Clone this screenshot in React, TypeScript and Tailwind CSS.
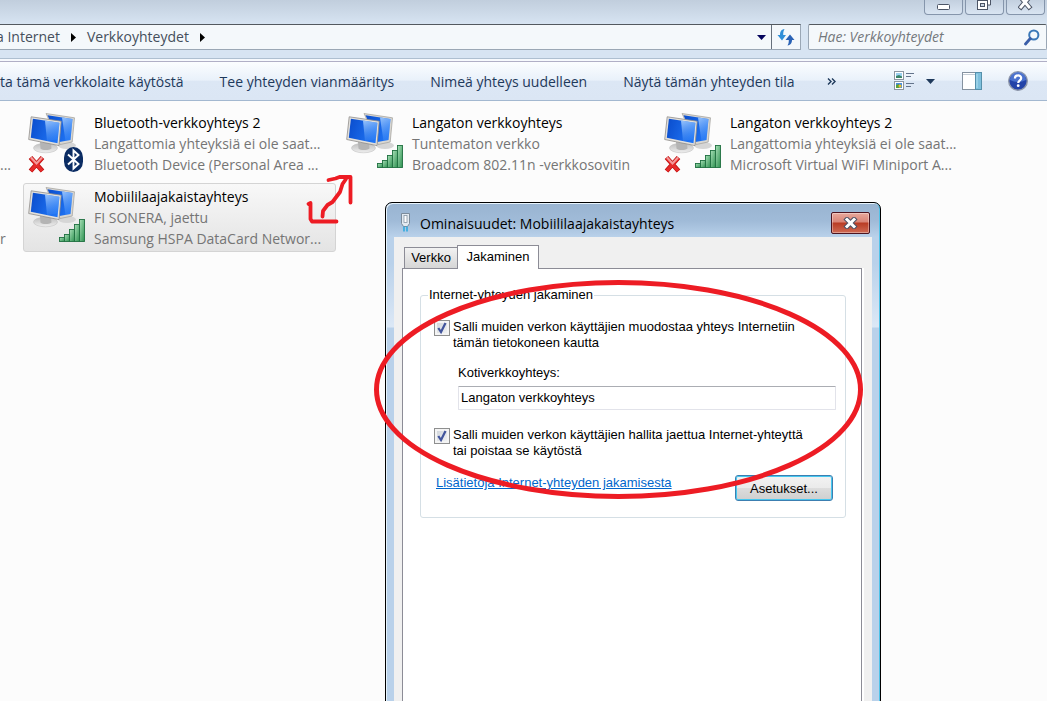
import React, { useId } from "react";

type Badge = "bluetooth" | "signal";

interface Connection {
  name: string;
  status: string;
  device: string;
  badge: Badge;
  offline?: boolean;
  selected?: boolean;
}

const connections: Connection[] = [
  {
    name: "Bluetooth-verkkoyhteys 2",
    status: "Langattomia yhteyksiä ei ole saat...",
    device: "Bluetooth Device (Personal Area ...",
    badge: "bluetooth",
    offline: true,
  },
  {
    name: "Langaton verkkoyhteys",
    status: "Tuntematon verkko",
    device: "Broadcom 802.11n -verkkosovitin",
    badge: "signal",
  },
  {
    name: "Langaton verkkoyhteys 2",
    status: "Langattomia yhteyksiä ei ole saat...",
    device: "Microsoft Virtual WiFi Miniport A...",
    badge: "signal",
    offline: true,
  },
  {
    name: "Mobiililaajakaistayhteys",
    status: "FI SONERA, jaettu",
    device: "Samsung HSPA DataCard Networ...",
    badge: "signal",
    selected: true,
  },
];

function ConnectionIcon({ badge, offline }: { badge: Badge; offline?: boolean }) {
  const id = useId();
  const screen = `${id}screen`;
  const bar = `${id}bar`;
  const metal = `${id}metal`;
  const glare = `${id}glare`;
  return (
    <svg width="60" height="64" viewBox="0 0 60 64" className="shrink-0" aria-hidden="true">
      <defs>
        <linearGradient id={screen} x1="0" y1="0" x2="1" y2="0.300">
          <stop offset="0" stopColor="#0a4ccc" />
          <stop offset="1" stopColor="#1f74f4" />
        </linearGradient>
        <linearGradient id={glare} x1="0" y1="0" x2="0.300" y2="1">
          <stop offset="0" stopColor="#a9d0ff" stopOpacity="0.900" />
          <stop offset="1" stopColor="#5fa2fa" stopOpacity="0.200" />
        </linearGradient>
        <linearGradient id={bar} x1="0" y1="0" x2="1" y2="1">
          <stop offset="0" stopColor="#a9e0b8" />
          <stop offset="1" stopColor="#2d9150" />
        </linearGradient>
        <linearGradient id={metal} x1="0" y1="0" x2="0" y2="1">
          <stop offset="0" stopColor="#bdbdbd" />
          <stop offset="1" stopColor="#efefef" />
        </linearGradient>
      </defs>
      <ellipse cx="41" cy="34.500" rx="9" ry="3.500" fill="#d6d6d6" />
      <path d="M20 2.500l28.500 4.300-2.300 24.200-12 2.500z" fill="#d9d7d2" stroke="#9f9d99" strokeWidth="0.700" />
      <path d="M21.500 4.200l25 3.800-2 21-11 2z" fill={`url(#${screen})`} />
      <path d="M36 6.400l10.500 1.600-2 21-5 1z" fill={`url(#${glare})`} />
      <ellipse cx="19.500" cy="37" rx="12" ry="4.800" fill={`url(#${metal})`} stroke="#c4c4c4" strokeWidth="0.600" />
      <path d="M14 31l11 1.500 0.500 5c-3 2-9 2-11 0z" fill="#b4b4b4" />
      <path d="M5.200 5.800l30 4.400-2.200 24.400-30.300-6.100z" fill="#e2e0dc" stroke="#8f8d8a" strokeWidth="0.800" />
      <path d="M6.900 7.800l26.500 3.900-1.900 20.500-26.700-5.400z" fill={`url(#${screen})`} />
      <path d="M19 9.600l14.400 2.100-1.500 16.500-10.900 1.800z" fill={`url(#${glare})`} />
      {offline && (
        <g>
          <path d="M4.500 46.500l12 13.500M16.500 46.500l-12 13.500" fill="none" stroke="#b80f0f" strokeWidth="4.800" />
          <path d="M4.800 46.800l11.400 13M16.200 46.800l-11.400 13" fill="none" stroke="#e62a2a" strokeWidth="3.400" />
          <path d="M5 46.500l5.500 6 5.500-6" fill="none" stroke="#f49a9a" strokeWidth="2" />
        </g>
      )}
      {badge === "signal" ? (
        <g fill={`url(#${bar})`} stroke="#1f7040" strokeWidth="0.900">
          <rect x="33.500" y="52.500" width="5" height="4" />
          <rect x="38.500" y="49.500" width="5" height="7" />
          <rect x="43.500" y="44.500" width="5" height="12" />
          <rect x="48.500" y="39.500" width="5" height="17" />
          <rect x="53.500" y="34.500" width="5" height="22" />
        </g>
      ) : (
        <g>
          <rect x="38" y="36" width="19" height="25" rx="9.500" ry="10.500" fill="#0b2c63" />
          <path d="M42 43.500l10.500 9.500-5 4.500V39.500l5 4.500L42 53.500" fill="none" stroke="#fff" strokeWidth="1.900" />
        </g>
      )}
    </svg>
  );
}

function ConnectionItem({ item }: { item: Connection }) {
  return (
    <li
      className={
        item.selected
          ? "flex h-[69px] gap-2 rounded-[3px] border border-[#d4d4d4] bg-linear-to-b from-[#f8f8f8] to-[#e4e4e4] pt-px pl-0.5"
          : "flex h-[69px] gap-2 rounded-[3px] border border-transparent pt-px pl-0.5"
      }
    >
      <ConnectionIcon badge={item.badge} offline={item.offline} />
      <div className="pt-px leading-[21px] whitespace-nowrap text-[#757575]">
        <p className="text-black">{item.name}</p>
        <p>{item.status}</p>
        <p>{item.device}</p>
      </div>
    </li>
  );
}

function Crumb({ children }: { children: string }) {
  return (
    <>
      <a href="#" className="text-[#454f5b]">{children}</a>
      <svg width="5" height="9" viewBox="0 0 5 9" aria-hidden="true">
        <path d="M0 0l5 4.500-5 4.500z" fill="#000" />
      </svg>
    </>
  );
}

function CaptionButton({ label, children }: { label: string; children: React.ReactNode }) {
  return (
    <button
      aria-label={label}
      className="flex h-[15px] w-[39px] items-center justify-center rounded-b-[4px] border border-t-0 border-[#8595ab] bg-linear-to-b from-[#c3d0df] to-[#d9e5f2] pb-1"
    >
      {children}
    </button>
  );
}

function CaptionBar() {
  return (
    <header className="flex h-6 justify-end gap-0.5 bg-linear-to-b from-[#c1cedd] to-[#d7e4f2] pr-0.5">
      <CaptionButton label="Pienennä">
        <svg width="14" height="12" viewBox="0 0 14 12">
          <rect x="0.500" y="5.500" width="12" height="5" rx="1" fill="#fff" stroke="#4c5566" />
        </svg>
      </CaptionButton>
      <CaptionButton label="Palauta">
        <svg width="16" height="12" viewBox="0 0 16 12">
          <path d="M4.500-1v-2h9v9h-3" fill="#fff" stroke="#4c5566" />
          <rect x="0.500" y="1.500" width="10" height="9" fill="#fff" stroke="#4c5566" />
          <rect x="3.500" y="4.500" width="4" height="3" fill="#c9d5e2" stroke="#4c5566" />
        </svg>
      </CaptionButton>
      <CaptionButton label="Sulje">
        <svg width="16" height="12" viewBox="0 0 16 12">
          <path d="M3-1.500l8 9.500M11-1.500l-8 9.500" stroke="#4c5566" strokeWidth="5" strokeLinecap="square" />
          <path d="M3-1.500l8 9.500M11-1.500l-8 9.500" stroke="#fff" strokeWidth="3" strokeLinecap="square" />
        </svg>
      </CaptionButton>
    </header>
  );
}

function AddressRow() {
  return (
    <div className="flex h-[34px] gap-[7px] bg-[#d7e4f2] pb-2">
      <div className="flex flex-1 border border-l-0 border-[#9aa7b5] border-t-[#53595f] bg-[#f4f8fb]">
        <nav className="-ml-1 flex flex-1 items-center gap-[11px] whitespace-nowrap">
          <Crumb>a Internet</Crumb>
          <Crumb>Verkkoyhteydet</Crumb>
        </nav>
        <button aria-label="Aiemmat sijainnit" className="flex w-5 items-center justify-center pt-px">
          <svg width="9" height="5" viewBox="0 0 9 5">
            <path d="M0 0h9L4.500 5z" fill="#04045c" />
          </svg>
        </button>
        <button aria-label="Päivitä" className="flex w-[29px] items-center justify-center border-l border-[#66707c]">
          <svg width="18" height="18" viewBox="0 0 18 18">
            <path d="M7.500 1C4 1.500 3 4 3 7H0.500L5 12.500 9 7H6.200C6.200 4.500 6.500 3 7.500 1z" fill="#2f8fd8" />
            <path d="M10.500 17.500C14 17 15 14.500 15 12H17.500L13 6.500 8.500 12H11.800C11.800 14.500 11.500 16 10.500 17.500z" fill="#2a62b5" />
          </svg>
        </button>
      </div>
      <label className="flex w-[239px] items-center rounded-[2px] border border-[#9aa7b5] border-t-[#53595f] bg-[#f4f8fb] pr-1.5 pl-[9px]">
        <input
          type="text"
          aria-label="Hae"
          placeholder="Hae: Verkkoyhteydet"
          className="min-w-0 flex-1 bg-transparent italic outline-none placeholder:text-[#74787d]"
        />
        <svg width="16" height="17" viewBox="0 0 16 17" aria-hidden="true">
          <circle cx="9.800" cy="6" r="4.600" fill="#f4f9fd" stroke="#3a78b8" strokeWidth="2" />
          <path d="M6.300 9.500L1.500 15" stroke="#3a5ea8" strokeWidth="2.800" strokeLinecap="round" />
        </svg>
      </label>
    </div>
  );
}

function CommandBar() {
  return (
    <div className="border-t border-[#aebfd0] bg-[#f6f9fd] pt-0.5">
      <div className="flex h-10 items-center border-t border-b border-t-[#b0afc6] border-b-[#a3b8d0] bg-[linear-gradient(180deg,#fbfdff_0%,#e9f1fa_48%,#dce7f5_50%,#dbe6f4_100%)] pr-[19px] text-[#1e395b]">
        <div className="flex gap-9 pt-0.5 whitespace-nowrap">
          <button>ta tämä verkkolaite käytöstä</button>
          <button>Tee yhteyden vianmääritys</button>
          <button>Nimeä yhteys uudelleen</button>
          <button>Näytä tämän yhteyden tila</button>
        </div>
        <button aria-label="Lisää komentoja" className="ml-8">
          <svg width="9" height="7" viewBox="0 0 9 7">
            <path d="M1 0.500l3 3-3 3M5 0.500l3 3-3 3" fill="none" stroke="#1e395b" strokeWidth="1.400" />
          </svg>
        </button>
        <div className="ml-auto flex items-center">
          <button aria-label="Muuta näkymää">
            <svg width="21" height="20" viewBox="0 0 21 20">
              <rect x="0.500" y="0.500" width="9" height="8" fill="#fff" stroke="#8b95a0" />
              <rect x="2" y="2" width="6" height="5" fill="#9bd0f0" />
              <path d="M2 5l3-1 3 1.500V7H2z" fill="#3a8468" />
              <rect x="0.500" y="10.500" width="9" height="8" fill="#fff" stroke="#8b95a0" />
              <rect x="2" y="12" width="6" height="5" fill="#4a8ee0" />
              <path d="M2 14l3-1v4H2z" fill="#58a03c" />
              <circle cx="6" cy="15" r="1.500" fill="#f0c020" />
              <path d="M12 2.500h8M12 5.500h5M12 12.500h8M12 15.500h5" stroke="#64748c" />
            </svg>
          </button>
          <button aria-label="Lisää vaihtoehtoja" className="ml-[11px]">
            <svg width="9" height="5" viewBox="0 0 9 5">
              <path d="M0 0h9L4.500 5z" fill="#1e395b" />
            </svg>
          </button>
          <button aria-label="Näytä esikatseluruutu" className="ml-[27px]">
            <svg width="20" height="18" viewBox="0 0 20 18">
              <rect x="0.500" y="0.500" width="19" height="17" fill="#fff" stroke="#8592a0" />
              <path d="M1 2.500h12" stroke="#c3ccd5" />
              <rect x="13.500" y="0.500" width="6" height="17" fill="#7fc0dd" stroke="#5590ab" />
              <path d="M15 2v14" stroke="#b3e0f0" />
            </svg>
          </button>
          <button aria-label="Ohje" className="ml-[26px]">
            <svg width="20" height="20" viewBox="0 0 20 20">
              <circle cx="10" cy="10" r="9.300" fill="#2343a8" stroke="#8f98aa" strokeWidth="1.400" />
              <path d="M2 9a8 8 0 0 1 16 0c-5 2.500-11 2.500-16 0z" fill="#5d86de" opacity="0.700" />
              <path d="M6.900 7.500c0-4.200 6.300-4 6.300-0.500 0 2.400-3 2.200-3 5" fill="none" stroke="#fff" strokeWidth="2.200" />
              <circle cx="10.200" cy="14.700" r="1.400" fill="#fff" />
            </svg>
          </button>
        </div>
      </div>
    </div>
  );
}

function CheckOption({ id, lines }: { id: string; lines: [string, string] }) {
  return (
    <div className="flex gap-[3px]">
      <span className="mt-px grid size-4 shrink-0">
        <input
          id={id}
          type="checkbox"
          defaultChecked
          className="peer col-start-1 row-start-1 size-4 appearance-none border border-[#8e8f8f] bg-linear-to-br from-[#cdd2d8] to-[#f5f6f7] shadow-[inset_0_0_0_2px_#f4f4f4]"
        />
        <svg viewBox="0 0 16 16" className="pointer-events-none invisible col-start-1 row-start-1 size-4 peer-checked:visible" aria-hidden="true">
          <path d="M4.300 8l2.700 4 4.500-9" fill="none" stroke="#41549c" strokeWidth="2.200" />
        </svg>
      </span>
      <label htmlFor={id}>
        {lines[0]}
        <br />
        {lines[1]}
      </label>
    </div>
  );
}

function PropertiesDialog() {
  return (
    <section
      role="dialog"
      aria-labelledby="dialog-title"
      className="absolute top-[202px] left-[385px] w-[496px] rounded-t-[7px] border border-black bg-[#b9d1ea] bg-[linear-gradient(180deg,#99b4d1_0px,#a0bbd8_18px,#b9d1ea_34px,#b9d1ea_60px,#dce8f6_124px,#b9d1ea_125px)] px-2 pb-2 font-['Liberation_Sans',Arial,sans-serif] text-[13px] leading-4 text-black shadow-[inset_1px_1px_0_#e6f3fc,inset_-1px_0_0_#4fc3e8]"
    >
      <div className="flex h-[34px] items-center pr-0.5 pl-1.5">
        <svg width="11" height="20" viewBox="0 0 11 20" aria-hidden="true" className="mt-1">
          <path d="M1.500 1.500h8v10l-2 3h-4l-2-3z" fill="#e3eaf1" stroke="#7b8b9b" />
          <rect x="4" y="3.500" width="3" height="7" fill="#fff" stroke="#8494a4" strokeWidth="0.800" />
          <path d="M4 14.500v5M7 14.500v5" stroke="#2faadf" strokeWidth="1.600" />
        </svg>
        <h1 id="dialog-title" className="ml-[9px] flex-1 pt-2 font-['Open_Sans','Noto_Sans',sans-serif] text-sm leading-5">
          Ominaisuudet: Mobiililaajakaistayhteys
        </h1>
        <button
          aria-label="Sulje"
          className="mt-1.5 flex h-[22px] w-[39px] items-center justify-center rounded-[2px] border border-[#4c1420] bg-[linear-gradient(180deg,#e8a89c_0%,#d98476_45%,#b93c24_50%,#cf6a54_100%)] shadow-[inset_0_0_0_1px_rgba(255,255,255,0.35)]"
        >
          <svg width="15" height="12" viewBox="0 0 15 12">
            <path d="M4 2.500l7 7M11 2.500l-7 7" stroke="#4d5164" strokeWidth="5" strokeLinecap="square" />
            <path d="M4 2.500l7 7M11 2.500l-7 7" stroke="#fff" strokeWidth="3" strokeLinecap="square" />
          </svg>
        </button>
      </div>
      <div className="bg-[#f0f0f0] px-2 pt-2 pb-12">
        <div role="tablist" className="flex items-end pl-0.5">
          <button
            role="tab"
            aria-selected="false"
            className="h-[21px] w-[53px] border border-r-0 border-b-0 border-[#8c8c96] bg-linear-to-b from-[#f2f2f2] to-[#d6d6d6]"
          >
            Verkko
          </button>
          <button
            role="tab"
            aria-selected="true"
            className="z-10 -mb-px h-6 w-[82px] border border-b-0 border-[#8c8c96] bg-white pb-0.5"
          >
            Jakaminen
          </button>
        </div>
        <div role="tabpanel" className="mr-0.5 min-h-[460px] border border-[#8c8c96] bg-white pt-[18px] pr-[15px] pl-[17px] shadow-[2px_0_0_#ffffff]">
          <fieldset className="rounded-[3px] border border-[#d5dfe5] pr-[9px] pb-4 pl-[13px]">
            <legend className="-ml-1.5 px-px">Internet-yhteyden jakaminen</legend>
            <div className="pt-4">
              <CheckOption
                id="allow-sharing"
                lines={["Salli muiden verkon käyttäjien muodostaa yhteys Internetiin", "tämän tietokoneen kautta"]}
              />
            </div>
            <div className="mt-3.5 flex flex-col gap-[5px] pl-6">
              <label htmlFor="home-network">Kotiverkkoyhteys:</label>
              <input
                id="home-network"
                type="text"
                defaultValue="Langaton verkkoyhteys"
                className="h-6 w-full rounded-[1px] border border-[#e2e3ea] border-t-[#abadb3] bg-white px-0.5 pb-0.5 outline-none"
              />
            </div>
            <div className="mt-[17px]">
              <CheckOption
                id="allow-control"
                lines={["Salli muiden verkon käyttäjien hallita jaettua Internet-yhteyttä", "tai poistaa se käytöstä"]}
              />
            </div>
            <div className="mt-4 flex items-start justify-between pr-[3px] pl-0.5">
              <a href="#" className="text-[#0066cc] underline">
                Lisätietoja Internet-yhteyden jakamisesta
              </a>
              <button className="h-[26px] w-[98px] rounded-[3px] border border-[#3c7fb1] bg-[linear-gradient(180deg,#f2f2f2_0%,#ebebeb_48%,#dddddd_50%,#cfcfcf_100%)] pt-px shadow-[inset_0_0_0_1px_#46c8f0]">
                Asetukset...
              </button>
            </div>
          </fieldset>
        </div>
      </div>
    </section>
  );
}

function Annotations() {
  return (
    <>
      <svg
        className="pointer-events-none absolute top-[172px] left-[303px] z-20"
        width="54"
        height="56"
        viewBox="303 172 54 56"
        fill="none"
        stroke="#ed1c24"
        strokeWidth="3.800"
        strokeLinejoin="round"
        strokeLinecap="round"
        aria-hidden="true"
      >
        <path d="M328.500 180l7-1.500 4-1.500h11v25.500" />
        <path d="M346 179l-3.500 5-2.500 8-4.500 6-3 4-5 3-4.500 6-0.500 5.500" />
        <path d="M308.500 204l2-1v16l1.500 2.500h24.500" />
      </svg>
      <svg
        className="pointer-events-none absolute top-[278px] left-[372px] z-20"
        width="494"
        height="224"
        viewBox="372 278 494 224"
        aria-hidden="true"
      >
        <ellipse cx="618.500" cy="389.500" rx="242" ry="107" fill="none" stroke="#ed1c24" strokeWidth="5" />
      </svg>
    </>
  );
}

export default function App() {
  return (
    <div className="relative h-screen overflow-hidden bg-[#fcfcfc] font-['Open_Sans','Noto_Sans',sans-serif] text-sm">
      <CaptionBar />
      <AddressRow />
      <CommandBar />
      <main className="flex pt-2">
        <div className="flex w-[23px] shrink-0 flex-col text-[#757575]">
          <p className="mt-[45px] leading-[21px]">...</p>
          <p className="mt-[53px] leading-[21px]">r</p>
        </div>
        <ul className="grid flex-1 grid-cols-[repeat(auto-fill,313px)] gap-[5px]">
          {connections.map((item) => (
            <ConnectionItem key={item.name} item={item} />
          ))}
        </ul>
      </main>
      <PropertiesDialog />
      <Annotations />
    </div>
  );
}
